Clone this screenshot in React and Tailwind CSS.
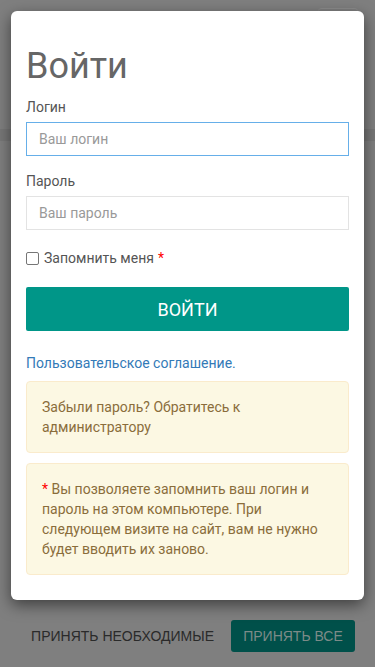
import React from "react";

function App() {
  return (
    <div className="relative h-[667px] w-[375px] overflow-hidden bg-[#7f7f7f] font-['Roboto','Liberation_Sans',sans-serif]">
      {/* page behind the overlay */}
      <div className="flex h-full flex-col">
        <div className="flex h-[129px] justify-end px-[17px] pt-[8px]">
          <div className="h-[30px] w-[40px] rounded-t-[4px] border-t border-[#8c8c8c]" />
        </div>
        <div className="h-[12px] bg-[#777777]" />
        <div className="flex-1" />
        <div className="flex h-[47px] items-start justify-end gap-[17px] pr-[20px] font-['Liberation_Sans',Arial,sans-serif]">
          <span className="pt-[6px] text-[14px] leading-[20px] uppercase text-[#2a2a2a]">
            Принять необходимые
          </span>
          <span className="flex h-[32px] w-[124px] items-center justify-center rounded-[3px] bg-[#00504a] text-[14px] uppercase text-[#7c8b88]">
            Принять все
          </span>
        </div>
      </div>

      {/* login modal */}
      <div className="absolute left-[11px] top-[11px] w-[353px] rounded-[6px] bg-white px-[15px] pt-[15px] pb-[15px] shadow-[0_5px_15px_rgba(0,0,0,0.5)]">
        <h1 className="mt-[20px] mb-[11px] text-[36px] leading-[40px] text-[#666]">Войти</h1>

        <label className="block text-[14px] leading-[20px] text-[#555]">Логин</label>
        <input
          className="mt-[5px] block h-[34px] w-full border border-[#66afe9] px-[12px] text-[14px] text-[#555] outline-none placeholder:text-[#999]"
          placeholder="Ваш логин"
        />

        <label className="mt-[15px] block text-[14px] leading-[20px] text-[#555]">Пароль</label>
        <input
          type="password"
          className="mt-[5px] block h-[34px] w-full border border-[#e3e3e3] px-[12px] text-[14px] text-[#555] outline-none placeholder:text-[#999]"
          placeholder="Ваш пароль"
        />

        <div className="mt-[18px] flex items-center text-[14px] leading-[20px] text-[#555]">
          <span className="mr-[5px] h-[13px] w-[13px] rounded-[2px] border border-[#767676] bg-white" />
          <span>Запомнить меня</span>
          <span className="ml-[4px] text-[#ff0000]">*</span>
        </div>

        <button className="mt-[19px] flex h-[44px] w-full items-center justify-center rounded-[2px] bg-[#009688] text-[18px] uppercase text-white">
          Войти
        </button>

        <div className="mt-[22px] text-[14px] leading-[20px] text-[#337ab7]">
          Пользовательское соглашение.
        </div>

        <div className="mt-[8px] rounded-[4px] border border-[#faebcc] bg-[#fcf8e3] p-[15px] text-[14px] leading-[20px] text-[#8a6d3b]">
          Забыли пароль? Обратитесь к администратору
        </div>

        <div className="mt-[10px] mb-[10px] rounded-[4px] border border-[#faebcc] bg-[#fcf8e3] p-[15px] text-[14px] leading-[20px] text-[#8a6d3b]">
          <span className="text-[#ff0000]">*</span> Вы позволяете запомнить ваш логин и пароль на этом
          компьютере. При следующем визите на сайт, вам не нужно будет вводить их заново.
        </div>
      </div>
    </div>
  );
}

export default App;
